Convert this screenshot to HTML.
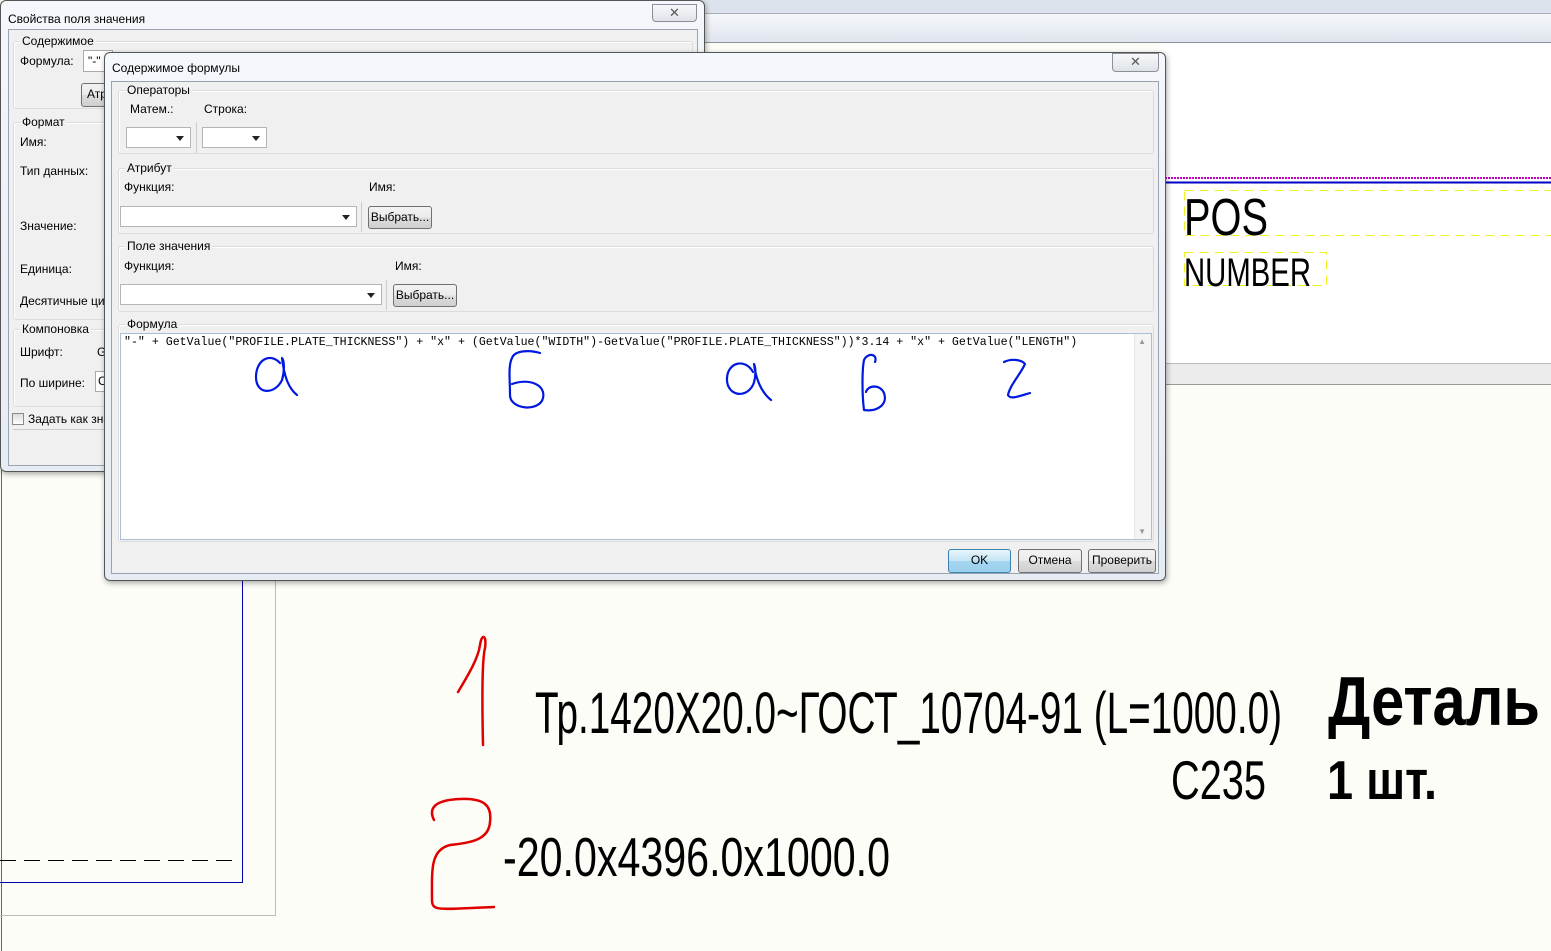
<!DOCTYPE html>
<html><head><meta charset="utf-8"><style>
*{box-sizing:border-box;margin:0;padding:0}
body{width:1551px;height:951px;overflow:hidden;background:#fdfdf8;font-family:"Liberation Sans","DejaVu Sans",sans-serif;font-size:12px;color:#000;position:relative}
.abs{position:absolute}
.win{position:absolute;border:1px solid #555;border-radius:6px;background:linear-gradient(#f4f7fb,#e6ecf3);box-shadow:1px 2px 6px rgba(0,0,0,.35)}
.content{position:absolute;background:#f0f0f0;border:1px solid #9aa4b0}
.grp{position:absolute;border:1px solid #dcdcdc;border-radius:3px;box-shadow:inset 1px 1px 0 #fff}
.lg{position:absolute;top:-8px;left:6px;background:#f0f0f0;padding:0 2px;font-size:12px}
.t{position:absolute;font-size:12px;white-space:nowrap}
.combo{position:absolute;background:#fff;border:1px solid #b5b5b5;height:21px}
.combo:after{content:"";position:absolute;right:6px;top:8px;border:4px solid transparent;border-top:5px solid #222}
.btn{position:absolute;border:1px solid #707070;border-radius:3px;background:linear-gradient(#f2f2f2,#ebebeb 50%,#dddddd 51%,#cfcfcf);font-size:12px;text-align:center;line-height:21px}
.xbtn{position:absolute;border:1px solid #8a8f98;border-radius:0 0 4px 4px;background:linear-gradient(#f7f8fa,#dfe3e9);text-align:center;color:#555;font-size:13px;line-height:16px}
</style></head><body>
<div class="abs" style="left:700px;top:0;width:851px;height:14px;background:#dde3ec;border-bottom:1px solid #a8b0bb"></div>
<div class="abs" style="left:700px;top:14px;width:851px;height:29px;background:linear-gradient(#f5f7fb,#dfe5ee);border-bottom:1px solid #8c939c"></div>
<div class="abs" style="left:1160px;top:43px;width:391px;height:320px;background:#fff"></div>
<div class="abs" style="left:1160px;top:363px;width:391px;height:22px;background:#ececec;border-top:1px solid #bbb;border-bottom:1px solid #999"></div>

<svg class="abs" style="left:0;top:0" width="1551" height="951">
 <line x1="1165" y1="178" x2="1551" y2="178" stroke="#c000c0" stroke-width="2" stroke-dasharray="2,1"/>
 <line x1="1165" y1="182.5" x2="1551" y2="182.5" stroke="#0000c8" stroke-width="2"/>
 <rect x="1184.5" y="190.5" width="380" height="45" fill="none" stroke="#f0f020" stroke-dasharray="9,6"/>
 <rect x="1184.5" y="252.5" width="142" height="33" fill="none" stroke="#f0f020" stroke-dasharray="9,6"/>
 <text x="1184" y="235" font-family="Liberation Sans Narrow,Liberation Sans,sans-serif" font-size="52" textLength="84" lengthAdjust="spacingAndGlyphs">POS</text>
 <text x="1184" y="286" font-family="Liberation Sans Narrow,Liberation Sans,sans-serif" font-size="40" textLength="127" lengthAdjust="spacingAndGlyphs">NUMBER</text>
 <line x1="1.5" y1="470" x2="1.5" y2="951" stroke="#666"/>
 <polyline points="0,915.5 275.5,915.5 275.5,560" fill="none" stroke="#bbb"/>
 <polyline points="0,882.5 242.5,882.5 242.5,560" fill="none" stroke="#0000b0"/>
 <line x1="0" y1="860.5" x2="238" y2="860.5" stroke="#000" stroke-dasharray="16,8"/>
 <g font-family="Liberation Sans Narrow,Liberation Sans,sans-serif">
 <text x="535" y="733" font-size="58" textLength="747" lengthAdjust="spacingAndGlyphs">Тр.1420X20.0~ГОСТ_10704-91 (L=1000.0)</text>
 <text x="1328" y="725" font-size="70" font-weight="bold" textLength="212" lengthAdjust="spacingAndGlyphs">Деталь</text>
 <text x="1171" y="799" font-size="55" textLength="95" lengthAdjust="spacingAndGlyphs">C235</text>
 <text x="1327" y="799" font-size="55" font-weight="bold" textLength="110" lengthAdjust="spacingAndGlyphs">1 шт.</text>
 <text x="503" y="876" font-size="55" textLength="387" lengthAdjust="spacingAndGlyphs">-20.0x4396.0x1000.0</text>
 </g>
 <g fill="none" stroke="#e00000" stroke-width="2.5" stroke-linecap="round">
  <path d="M458,692 C465,680 478,660 480,645 C482,632 487,636 485,648 C482,660 482,700 483,745"/>
  <path d="M434,820 C428,808 435,800 460,799 C485,798 492,806 490,822 C489,840 470,843 450,845 C430,850 432,870 432,900 C432,912 440,909 494,907"/>
 </g>
</svg>

<div class="win" style="left:0;top:0;width:705px;height:472px">
 <div class="t" style="left:7px;top:11px">Свойства поля значения</div>
 <div class="xbtn" style="left:651px;top:3px;width:45px;height:18px">✕</div>
 <div class="content" style="left:7px;top:28px;width:690px;height:437px">
  <div class="grp" style="left:4px;top:11px;width:680px;height:68px"><div class="lg">Содержимое</div></div>
  <div class="t" style="left:11px;top:24px">Формула:</div>
  <div class="abs" style="left:74px;top:20px;width:30px;height:22px;background:#fff;border:1px solid #aaa;padding:3px 4px">"-"</div>
  <div class="btn" style="left:72px;top:53px;width:40px;height:24px;text-align:left;padding-left:5px">Атр</div>
  <div class="grp" style="left:4px;top:92px;width:680px;height:198px"><div class="lg">Формат</div></div>
  <div class="t" style="left:11px;top:105px">Имя:</div>
  <div class="t" style="left:11px;top:134px">Тип данных:</div>
  <div class="t" style="left:11px;top:189px">Значение:</div>
  <div class="t" style="left:11px;top:232px">Единица:</div>
  <div class="t" style="left:11px;top:264px">Десятичные ци</div>
  <div class="grp" style="left:4px;top:299px;width:680px;height:78px"><div class="lg">Компоновка</div></div>
  <div class="t" style="left:11px;top:315px">Шрифт:</div>
  <div class="t" style="left:88px;top:315px">G</div>
  <div class="t" style="left:11px;top:346px">По ширине:</div>
  <div class="abs" style="left:86px;top:341px;width:20px;height:21px;background:#fff;border:1px solid #aaa;padding:2px">C</div>
  <div class="abs" style="left:3px;top:383px;width:12px;height:12px;border:1px solid #8a8a8a;background:linear-gradient(#ddd,#fff)"></div>
  <div class="t" style="left:19px;top:382px">Задать как зна</div>
  <div class="abs" style="left:4px;top:399px;width:680px;height:1px;background:#ccc"></div>
 </div>
</div>

<div class="win" style="left:104px;top:52px;width:1062px;height:529px">
 <div class="t" style="left:7px;top:8px">Содержимое формулы</div>
 <div class="xbtn" style="left:1007px;top:0px;width:47px;height:19px">✕</div>
 <div class="content" style="left:6px;top:28px;width:1048px;height:493px">
  <div class="grp" style="left:6px;top:8px;width:1036px;height:64px"><div class="lg">Операторы</div></div>
  <div class="t" style="left:18px;top:20px">Матем.:</div>
  <div class="t" style="left:92px;top:20px">Строка:</div>
  <div class="combo" style="left:14px;top:45px;width:65px"></div>
  <div class="abs" style="left:84px;top:40px;width:1px;height:31px;background:#ccc"></div>
  <div class="combo" style="left:90px;top:45px;width:65px"></div>
  <div class="grp" style="left:6px;top:86px;width:1036px;height:66px"><div class="lg">Атрибут</div></div>
  <div class="t" style="left:12px;top:98px">Функция:</div>
  <div class="t" style="left:257px;top:98px">Имя:</div>
  <div class="combo" style="left:8px;top:124px;width:237px"></div>
  <div class="abs" style="left:249px;top:120px;width:1px;height:30px;background:#ccc"></div>
  <div class="btn" style="left:256px;top:124px;width:64px;height:23px">Выбрать...</div>
  <div class="grp" style="left:6px;top:164px;width:1036px;height:66px"><div class="lg">Поле значения</div></div>
  <div class="t" style="left:12px;top:177px">Функция:</div>
  <div class="t" style="left:283px;top:177px">Имя:</div>
  <div class="combo" style="left:8px;top:202px;width:262px"></div>
  <div class="abs" style="left:274px;top:198px;width:1px;height:30px;background:#ccc"></div>
  <div class="btn" style="left:281px;top:202px;width:64px;height:23px">Выбрать...</div>
  <div class="grp" style="left:6px;top:242px;width:1036px;height:218px"><div class="lg">Формула</div></div>
  <div class="abs" style="left:8px;top:251px;width:1032px;height:207px;background:#fff;border:1px solid #a9c0d8">
   <div class="t" style="left:3px;top:2px;font-family:'Liberation Mono',monospace;font-size:11.6px;letter-spacing:0">"-" + GetValue("PROFILE.PLATE_THICKNESS") + "x" + (GetValue("WIDTH")-GetValue("PROFILE.PLATE_THICKNESS"))*3.14 + "x" + GetValue("LENGTH")</div>
   <div class="abs" style="right:0;top:0;width:17px;height:205px;background:#f4f4f4;border-left:1px solid #e6e6e6"></div>
   <div class="t" style="right:5px;top:3px;font-size:8px;color:#999">▲</div>
   <div class="t" style="right:5px;bottom:3px;font-size:8px;color:#999">▼</div>
  </div>
  <div class="btn" style="left:836px;top:467px;width:63px;height:24px;border-color:#3c7fb1;background:linear-gradient(#e8f5fc,#c4e5f6 50%,#a5d5ef 51%,#9ad0ee)">OK</div>
  <div class="btn" style="left:906px;top:467px;width:64px;height:24px">Отмена</div>
  <div class="btn" style="left:976px;top:467px;width:68px;height:24px">Проверить</div>
 </div>
</div>

<svg class="abs" style="left:0;top:0;pointer-events:none" width="1551" height="951">
 <g fill="none" stroke="#0018e0" stroke-width="2.2" stroke-linecap="round" stroke-linejoin="round">
  <path d="M280,363 C270,352 256,360 256,377 C256,395 275,395 282,380 C285,370 284,360 282,358 C284,375 288,388 297,395"/>
  <path d="M540,353 C530,350 515,350 512,358 C508,366 510,380 510,395 C510,410 540,412 543,398 C546,385 530,378 512,384"/>
  <path d="M753,372 C745,358 728,362 727,378 C726,395 745,400 753,385 C756,378 756,368 754,364 C756,380 762,393 771,400"/>
  <path d="M864,360 C862,370 862,395 864,410 C878,412 888,404 884,393 C880,384 868,385 866,392 M864,360 C868,352 878,354 875,362"/>
  <path d="M1004,362 C1012,358 1022,360 1025,364 C1020,375 1010,385 1008,395 C1010,400 1020,396 1030,393"/>
 </g>
</svg>
</body></html>
